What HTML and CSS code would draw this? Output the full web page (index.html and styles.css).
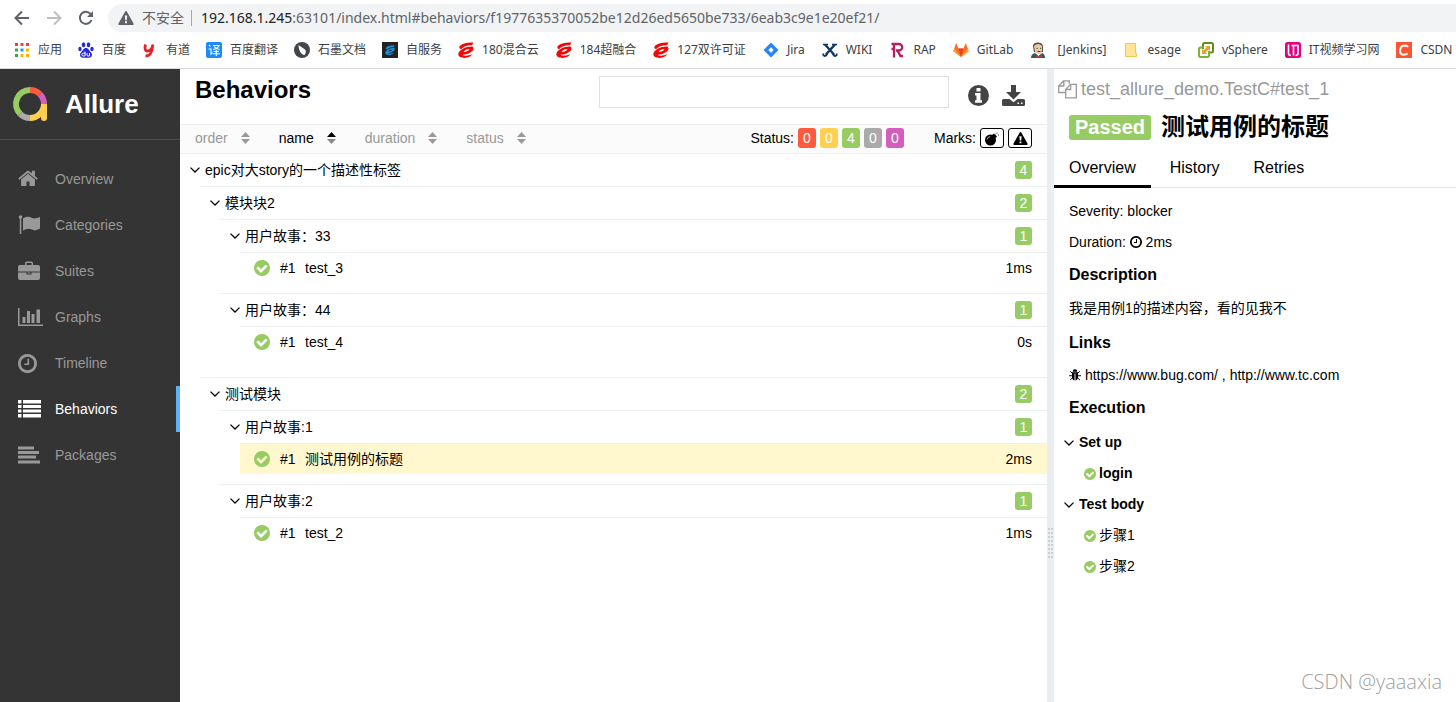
FILE: index.html
```html
<!DOCTYPE html>
<html lang="zh-CN">
<head>
<meta charset="utf-8">
<title>Allure Report</title>
<link rel="stylesheet" href="styles.css">
</head>
<body>
<svg class="defs" aria-hidden="true">
  <symbol id="check" viewBox="128 128 1536 1536"><path d="M1412 734q0-28-18-46l-91-90q-19-19-45-19t-45 19l-408 407-226-226q-19-19-45-19t-45 19l-91 90q-18 18-18 46 0 27 18 45l362 362q19 19 45 19 27 0 46-19l543-543q18-18 18-45zm252 162q0 209-103 385.500t-279.500 279.500-385.500 103-385.500-103-279.500-279.500-103-385.500 103-385.500 279.500-279.500 385.500-103 385.500 103 279.500 279.500 103 385.500z"/></symbol>
  <symbol id="clock" viewBox="128 128 1536 1536"><path d="M1024 544v448q0 14-9 23t-23 9h-320q-14 0-23-9t-9-23v-64q0-14 9-23t23-9h224v-352q0-14 9-23t23-9h64q14 0 23 9t9 23zm416 352q0-148-73-273t-198-198-273-73-273 73-198 198-73 273 73 273 198 198 273 73 273-73 198-198 73-273zm224 0q0 209-103 385.500t-279.500 279.500-385.500 103-385.500-103-279.500-279.500-103-385.500 103-385.500 279.500-279.500 385.500-103 385.500 103 279.500 279.500 103 385.500z"/></symbol>
  <symbol id="chevron" viewBox="0 0 10 6"><path d="M.5.6 5 5 9.500.6" fill="none" stroke="currentColor" stroke-width="1.300"/></symbol>
  <symbol id="sort" viewBox="0 0 9 12"><path d="M0 5 4.500 0 9 5z"/><path d="M0 7h9l-4.500 5z"/></symbol>
  <symbol id="warn" viewBox="0 0 16 14"><path fill-rule="evenodd" d="M8 0q.6 0 1 .7l6.500 11.800q.7 1.500-.8 1.500H1.300q-1.500 0-.8-1.500L7 .7Q7.400 0 8 0zM6.800 4.500l.4 4.700h1.600l.4-4.700zM7 10.300v1.900h2v-1.900z"/></symbol>
  <symbol id="ecloud" viewBox="0 0 16 16"><path d="M15.500.5C10 .2 3.500 1.500 1.600 4.300.8 5.700 1.700 7 3 7.200 5.500 4.500 9.500 3 14 3.300zM14.800 4.700C9 4 1.500 7.600.4 11.500-.4 15 4 16.300 8 15.800c3-.4 5.500-2 6.500-3.800-3 1.500-8.500 2.500-9.700.8 4.500-.3 10-2.700 10.700-5.800.2-1-.1-2-.7-2.300zM5.500 10c1-1.800 3.700-3 6-3-.3 1.600-3.200 3-6 3z"/></symbol>
</svg>

<header class="browser">
  <div class="toolbar">
    <button class="tool" aria-label="后退"><svg width="16" height="16" viewBox="0 0 16 16"><path d="M15 8H2M8 1.500 1.500 8 8 14.500" fill="none" stroke="#5f6368" stroke-width="2"/></svg></button>
    <button class="tool" aria-label="前进"><svg width="16" height="16" viewBox="0 0 16 16"><path d="M1 8h13M8 1.500 14.500 8 8 14.500" fill="none" stroke="#bdbfc1" stroke-width="2"/></svg></button>
    <button class="tool" aria-label="刷新"><svg width="16" height="16" viewBox="0 0 16 16"><path d="M13.500 10A6 6 0 1 1 12.500 4" fill="none" stroke="#5f6368" stroke-width="2"/><path d="M15 1v6H9z" fill="#5f6368"/></svg></button>
    <div class="address">
      <svg width="16" height="14"><use href="#warn"/></svg>
      <span class="insecure">不安全</span>
      <span class="url"><b>192.168.1.245</b>:63101/index.html#behaviors/f1977635370052be12d26ed5650be733/6eab3c9e1e20ef21/</span>
    </div>
  </div>
  <nav class="bookmarks" aria-label="书签">
    <a href="#"><svg viewBox="0 0 16 16"><path d="M1 1h3v3H1zM6.500 1h3v3h-3zM12 1h3v3h-3z" fill="#ea4335"/><path d="M1 6.500h3v3H1z" fill="#34a853"/><path d="M6.500 6.500h3v3h-3z" fill="#2196f3"/><path d="M12 6.500h3v3h-3zM6.500 12h3v3h-3zM12 12h3v3h-3z" fill="#fbb300"/><path d="M1 12h3v3H1z" fill="#34a853"/></svg>应用</a>
    <a href="#"><svg viewBox="0 0 16 16" fill="#2529d8"><ellipse cx="5.500" cy="2.800" rx="1.800" ry="2.500"/><ellipse cx="10.500" cy="2.800" rx="1.800" ry="2.500"/><ellipse cx="2" cy="7" rx="1.700" ry="2.200"/><ellipse cx="14" cy="7" rx="1.700" ry="2.200"/><path d="M8 6c2.500 0 3 2.500 5 4.500 2 2.200.6 5.200-1.800 5.200-1.500 0-4.900 0-6.400 0C2.400 15.700 1 12.700 3 10.500 5 8.500 5.500 6 8 6z"/><path d="M7 9.500v4.500H5.300a1.200 1.200 0 0 1 0-2.800H7M9 11v2q0 1 1 1h1.500v-3" fill="none" stroke="#fff"/></svg>百度</a>
    <a href="#"><svg viewBox="0 0 16 16"><path d="M3.500 2.500C2.500 6 3 9 5.500 9S10 7 11 2.500M10.500 5C10 11 8 14 3.500 14" fill="none" stroke="#e6212a" stroke-width="2.800"/></svg>有道</a>
    <a href="#"><svg viewBox="0 0 16 16"><rect width="16" height="16" rx="2" fill="#1a8cff"/><path d="m3 3 1.500 1.500M2.500 7H5v5l1.500-1.200M7 3.500h6Q11.500 7 7 7.500M8 4.500q2 2.500 5.500 3M7.500 9.500h5.500M7 11.700h7M10.300 8v6" fill="none" stroke="#fff" stroke-width="1.100"/></svg>百度翻译</a>
    <a href="#"><svg viewBox="0 0 16 16"><circle cx="8" cy="8" r="8" fill="#41464b"/><path d="M4.500 3 11 7.500c1.500 2 .8 4.200-.5 5.500C7 12.500 4.500 8 4.500 3z" fill="#fff"/></svg>石墨文档</a>
    <a href="#"><svg viewBox="0 0 16 16"><path fill="#222" d="M0 0h16v16H0z"/><svg x="3" y="3" width="10" height="10" fill="#168ddd"><use href="#ecloud"/></svg></svg>自服务</a>
    <a href="#" class="mixed"><svg fill="#f00808"><use href="#ecloud"/></svg>180混合云</a>
    <a href="#" class="mixed"><svg fill="#f00808"><use href="#ecloud"/></svg>184超融合</a>
    <a href="#" class="mixed"><svg fill="#f00808"><use href="#ecloud"/></svg>127双许可证</a>
    <a href="#" class="mixed"><svg viewBox="0 0 16 16"><path fill="#2684ff" fill-rule="evenodd" d="M8 .5 15.500 8 8 15.500.5 8zM8 5.300 5.300 8 8 10.700 10.700 8z"/></svg>Jira</a>
    <a href="#" class="mixed"><svg viewBox="0 0 16 16" fill="none" stroke="#12386b"><path d="M3 2.500 12 12.500M13 2.500 4 12.500" stroke-width="2.400"/><path d="M1 2.500h5M10 2.500h5" stroke-width="1.500"/><path d="M5 11.500q-.5 2.500-2.500 2.500Q.8 13.500 1.500 11.500M11 11.500q.5 2.500 2.500 2.500 1.700-.5 1-2.500" stroke-width="1.800"/></svg>WIKI</a>
    <a href="#" class="mixed"><svg viewBox="0 0 16 16" fill="none" stroke="#b51f5f" stroke-width="2.300"><path d="M2.500 2H10a3 3 0 0 1 0 6.500H7M5 2v13.500M8.500 8.500l3 5.500H14M2.500 7h3"/></svg>RAP</a>
    <a href="#" class="mixed"><svg viewBox="0 0 16 16"><path d="M8 15 .3 9.300 3.200 1l2.300 5.500h5L12.800 1l2.900 8.300z" fill="#fc6d26"/><path d="M8 15 5.500 6.500h5z" fill="#e24329"/><path d="m1.300 6.500-1 2.800L8 15zM14.700 6.500l1 2.800L8 15z" fill="#fca326"/></svg>GitLab</a>
    <a href="#" class="mixed wide"><svg viewBox="0 0 16 16"><path d="M3 4q0-3.500 5-3.500T13 5v5H4z" fill="#5b5048"/><path d="M4 4q4-4 8 0v4.500Q11.500 12 8.500 12T5 9z" fill="#e8cda9"/><path d="M1 16q0-4 4-5l3.500 3 3.500-3q3 1 3 5z" fill="#3e5560"/><path d="m6.500 13 2 1 3-1v3l-3-1-2 1z" fill="#d33833"/><path d="M6.500 6.300h1.200M10 6.300h1.200M7.500 9.500h3" stroke="#333"/></svg>[Jenkins]</a>
    <a href="#" class="mixed"><svg viewBox="0 0 16 16"><path d="M1.500 1.500h10v10h1v3h-11z" fill="#ffe594" stroke="#edc95d"/></svg>esage</a>
    <a href="#" class="mixed"><svg viewBox="0 0 16 16" fill="none"><rect x="5" y="1" width="10" height="9.500" rx="1.500" stroke="#5f8f18" stroke-width="2"/><rect x="1" y="5.500" width="10" height="9.500" rx="1.500" stroke="#7bb52c" stroke-width="2"/><path d="M6 3h7v6h-3v4H3V7h3z" fill="#fff"/><path d="M7 4h5v5l-1.500-1.500-3 3L9 12H4V7l1.500 1.500 3-3z" fill="#e6a32e"/></svg>vSphere</a>
    <a href="#" class="mixed"><svg viewBox="0 0 16 16"><rect width="16" height="16" rx="2.500" fill="#e4007f"/><path d="M3.500 2.500V11q0 2.500 2.500 2.500M6.500 3.500h6.500v7.500q0 2.500-2.500 2.500M8.500 3.500v10" fill="none" stroke="#fff" stroke-width="1.600"/></svg>IT视频学习网</a>
    <a href="#" class="mixed"><svg viewBox="0 0 16 16"><path fill="#fc5531" d="M0 0h16v16H0z"/><path d="M12 5Q11 3.500 8.800 3.500 4.500 3.700 4 8.500 4 12.500 7.500 12.700 10 12.700 11.500 11.500" fill="none" stroke="#fff" stroke-width="2"/></svg>CSDN</a>
  </nav>
</header>

<div class="app">
  <aside class="side">
    <a class="brand" href="#">
      <svg width="36" height="36" viewBox="0 0 36 36" fill="none" stroke-width="6"><path d="M18 4a14 14 0 0 1 9.900 4.100" stroke="#fd5a3e"/><path d="M27.900 8.100A14 14 0 0 1 32 18" stroke="#d35ebe"/><path d="M32 18a14 14 0 0 1-14 14" stroke="#ffd050"/><path d="M18 32a14 14 0 0 1-9.900-4.100" stroke="#aaa"/><path d="M8.100 27.900A14 14 0 0 1 18 4" stroke="#97cc64"/><path d="M32 18v14" stroke="#ffd050"/><circle cx="32" cy="32" r="3" fill="#ffd050" stroke="none"/></svg>
      <span>Allure</span>
    </a>
    <nav class="menu">
      <a href="#"><svg viewBox="64 200 1664 1500" width="20" height="18"><path d="M1472 992v480q0 26-19 45t-45 19h-384v-384h-256v384h-384q-26 0-45-19t-19-45v-480q0-1 .5-3t.5-3l575-474 575 474q1 2 1 6zm223-69l-62 74q-8 9-21 11h-3q-13 0-21-7l-692-577-692 577q-12 8-24 7-13-2-21-11l-62-74q-8-10-7-23.500t11-21.500l719-599q32-26 76-26t76 26l244 204v-195q0-14 9-23t23-9h192q14 0 23 9t9 23v408l219 182q10 8 11 21.500t-7 23.500z"/></svg>Overview</a>
      <a href="#"><svg viewBox="0 0 23 20" width="23" height="20"><circle cx="2.500" cy="2" r="1.800"/><path d="M1.800 2h1.500v17H1.800zM5 3.500C8 1.500 11 1 14 3q3 1.300 8-.9v11.500q-4.500 3-8 1-4-2.200-9 .9z"/></svg>Categories</a>
      <a href="#"><svg viewBox="0 0 22 20" width="22" height="20"><path fill-rule="evenodd" d="M7 4V2q0-1.500 1.500-1.500h5Q15 .5 15 2v2h5q2 0 2 2v4.500H0V6q0-2 2-2zm1.500 0h5V2h-5zM0 11.500h8.500v2h5v-2H22V17q0 2-2 2H2q-2 0-2-2zM9.500 11.500h3v1h-3z"/></svg>Suites</a>
      <a href="#"><svg viewBox="0 0 25 20" width="25" height="20"><path d="M0 1h1.500v16.500H25V19H0zM4.500 10h3v6h-3zM9 4h3v12H9zM13.500 7h3v9h-3zM18.500 2.500H22V16h-3.500z"/></svg>Graphs</a>
      <a href="#"><svg width="19" height="19"><use href="#clock"/></svg>Timeline</a>
      <a href="#" class="active"><svg viewBox="0 0 23 20" width="23" height="20"><path d="M0 1h3.500v3.500H0zM5 1h18v3.500H5zM0 6h3.500v3H0zM5 6h18v3H5zM0 10.500h3.500v3H0zM5 10.500h18v3H5zM0 15h3.500v3.500H0zM5 15h18v3.500H5z"/></svg>Behaviors</a>
      <a href="#"><svg viewBox="0 0 22 20" width="22" height="20"><path d="M0 1.500h16v3H0zM0 6h21v3H0zM0 10.500h18v3H0zM0 15.500h22v3H0z"/></svg>Packages</a>
    </nav>
  </aside>

  <main class="main">
    <div class="head">
      <h1>Behaviors</h1>
      <input class="search" type="text" aria-label="Search">
      <div class="actions">
        <button aria-label="Info"><svg width="21" height="21" viewBox="0 0 21 21"><path fill-rule="evenodd" d="M10.500 0a10.500 10.500 0 1 1 0 21 10.500 10.500 0 0 1 0-21zM8.500 3v3.500h4V3zM7 8v2.500h1.500v4.700H7v2.500h7v-2.500h-1.500V8z"/></svg></button>
        <button aria-label="Download"><svg width="23" height="23" viewBox="0 0 23 23"><path fill-rule="evenodd" d="M9 1h5v7h5l-7.500 7.500L4 8h5zM1.500 15h6l4 3.300 4-3.300h6q1.500 0 1.500 1.500v4Q23 22 21.500 22h-20Q0 22 0 20.500v-4Q0 15 1.500 15zM15.500 18.500V20H17v-1.500zM19 18.500V20h1.500v-1.500z"/></svg></button>
      </div>
    </div>
    <div class="filters">
      <div class="sorts">
        <button>order<svg width="9" height="12"><use href="#sort"/></svg></button>
        <button class="asc">name<svg width="9" height="12" viewBox="0 0 9 12"><path d="M0 5 4.500 0 9 5z"/><path d="M0 7h9l-4.500 5z" fill="#888"/></svg></button>
        <button>duration<svg width="9" height="12"><use href="#sort"/></svg></button>
        <button>status<svg width="9" height="12"><use href="#sort"/></svg></button>
      </div>
      <div class="group">Status:
        <button class="count failed">0</button><button class="count broken">0</button><button class="count passed">4</button><button class="count skipped">0</button><button class="count unknown">0</button>
      </div>
      <div class="group">Marks:
        <button class="mark" aria-label="Flaky"><svg width="16" height="15" viewBox="0 0 16 15"><circle cx="6.500" cy="9" r="5.500"/><path d="m8 4 2-1.500 3 3L11.500 7z"/><path d="m11 4 1.500-2H14M14.500 3v2" stroke="#999" fill="none"/><path d="M3 8.500q.5-2.500 3-3" stroke="#fff" fill="none" stroke-width=".7"/></svg></button>
        <button class="mark" aria-label="Warning"><svg width="15" height="13"><use href="#warn"/></svg></button>
      </div>
    </div>

    <div class="tree">
      <section class="node">
        <div class="title"><svg class="chev"><use href="#chevron"/></svg><span>epic对大story的一个描述性标签</span><span class="badge">4</span></div>
        <section class="node feature">
          <div class="title"><svg class="chev"><use href="#chevron"/></svg><span>模块块2</span><span class="badge">2</span></div>
          <section class="node story">
            <div class="title"><svg class="chev"><use href="#chevron"/></svg><span>用户故事：33</span><span class="badge">1</span></div>
            <a class="leaf" href="#"><svg class="ok"><use href="#check"/></svg><span class="num">#1</span><span>test_3</span><span class="time">1ms</span></a>
          </section>
          <section class="node story">
            <div class="title"><svg class="chev"><use href="#chevron"/></svg><span>用户故事：44</span><span class="badge">1</span></div>
            <a class="leaf" href="#"><svg class="ok"><use href="#check"/></svg><span class="num">#1</span><span>test_4</span><span class="time">0s</span></a>
          </section>
        </section>
        <section class="node feature">
          <div class="title"><svg class="chev"><use href="#chevron"/></svg><span>测试模块</span><span class="badge">2</span></div>
          <section class="node story">
            <div class="title"><svg class="chev"><use href="#chevron"/></svg><span>用户故事:1</span><span class="badge">1</span></div>
            <a class="leaf selected" href="#"><svg class="ok"><use href="#check"/></svg><span class="num">#1</span><span>测试用例的标题</span><span class="time">2ms</span></a>
          </section>
          <section class="node story">
            <div class="title"><svg class="chev"><use href="#chevron"/></svg><span>用户故事:2</span><span class="badge">1</span></div>
            <a class="leaf" href="#"><svg class="ok"><use href="#check"/></svg><span class="num">#1</span><span>test_2</span><span class="time">1ms</span></a>
          </section>
        </section>
      </section>
    </div>
  </main>

  <div class="gutter"><span class="grip"></span></div>

  <article class="detail">
    <div class="fullname"><svg width="19" height="19" viewBox="0 0 19 19" fill="none" stroke="currentColor" stroke-width="1.300"><path d="M7.500 12.500H.7V6L5.500.8h5.800v3M5.800 1v5H1M12.500 4.300h5.800v13.500H7.700V9.500zM12.700 4.500v5H8"/></svg><span>test_allure_demo.TestC#test_1</span></div>
    <h2 class="case"><span class="state">Passed</span>测试用例的标题</h2>
    <nav class="tabs"><a href="#" class="current">Overview</a><a href="#">History</a><a href="#">Retries</a></nav>
    <div class="body">
      <p>Severity: blocker</p>
      <p>Duration: <svg class="small"><use href="#clock"/></svg> 2ms</p>
      <h3>Description</h3>
      <p class="text">我是用例1的描述内容，看的见我不</p>
      <h3>Links</h3>
      <p class="links"><svg class="small" viewBox="0 0 13 13"><path d="M4 3q0-2.700 2.500-2.700T9 3zM3.200 3.600h6.600V8.500q0 3.500-2.800 3.900V5H6v7.400Q3.200 12 3.200 8.500z"/><path d="m1.200 2.500 2.300 2M11.800 2.500l-2.300 2M0 7.300h3.500M13 7.300H9.500M1.200 12l2.500-2.500M11.800 12 9.300 9.500" stroke="currentColor" fill="none"/></svg> <a href="#">https://www.bug.com/</a> , <a href="#">http://www.tc.com</a></p>
      <h3>Execution</h3>
      <div class="steps">
        <div class="stage"><svg class="chev"><use href="#chevron"/></svg>Set up</div>
        <div class="step strong"><svg class="tick"><use href="#check"/></svg>login</div>
        <div class="stage"><svg class="chev"><use href="#chevron"/></svg>Test body</div>
        <div class="step"><svg class="tick"><use href="#check"/></svg>步骤1</div>
        <div class="step"><svg class="tick"><use href="#check"/></svg>步骤2</div>
      </div>
    </div>
    <div class="watermark">CSDN @yaaaxia</div>
  </article>
</div>
</body>
</html>
```

FILE: styles.css
```css
* { box-sizing: border-box; }
body {
  margin: 0;
  height: 100vh;
  display: flex;
  flex-direction: column;
  overflow: hidden;
  background: #fff;
  color: #000;
  fill: currentColor;
  font: 14px/20px "Liberation Sans", "Noto Sans CJK SC", sans-serif;
}
a { color: inherit; text-decoration: none; }
button { padding: 0; border: 0; background: none; color: inherit; font: inherit; cursor: pointer; }
svg { flex: none; }
.defs { position: absolute; width: 0; height: 0; }

/* Browser chrome */
.browser {
  flex: none;
  border-bottom: 1px solid #dadada;
  font-family: "Noto Sans", "Noto Sans CJK SC", sans-serif;
}
.toolbar { display: flex; align-items: center; padding: 4px 0 0 14px; }
.tool { display: flex; margin-right: 16px; }
.address {
  flex: 1;
  display: flex;
  align-items: center;
  height: 28px;
  margin-left: -2px;
  padding-left: 10px;
  border-radius: 14px 0 0 14px;
  background: #f1f3f4;
  color: #5f6368;
  font-size: 14px;
  white-space: nowrap;
}
.insecure { margin: 0 7px 0 8px; }
.url { padding-left: 9px; border-left: 1px solid #a5a8ab; line-height: 16px; }
.url b { color: #202124; font-weight: normal; }
.bookmarks { display: flex; gap: 16px; height: 36px; padding-left: 14px; overflow: hidden; }
.bookmarks a { display: flex; flex: none; align-items: center; gap: 8px; color: #3c4043; font-size: 12px; white-space: nowrap; }
.bookmarks a > svg { width: 16px; height: 16px; }
.bookmarks .mixed { padding-right: 1px; }
.bookmarks .wide { gap: 11px; }

/* Sidebar */
.app { flex: 1; display: flex; min-height: 0; }
.side { flex: none; width: 180px; background: #343434; color: #999; }
.brand { display: flex; align-items: center; gap: 17px; height: 71px; padding-left: 12px; border-bottom: 1px solid #505050; color: #fff; font-size: 26px; font-weight: bold; }
.menu { display: flex; flex-direction: column; padding-top: 16px; }
.menu a { display: grid; grid-template-columns: 37px 1fr; align-items: center; height: 46px; padding-left: 18px; }
.menu .active { border-right: 4px solid #5fb0f5; color: #fff; }

/* Tree pane */
.main { flex: 867 1 0; min-width: 0; }
.head { display: flex; align-items: flex-start; padding: 7px 22px 10px 15px; }
.head h1 { flex: 1; margin: 0; font-size: 24px; line-height: 28px; }
.search { width: 350px; height: 32px; border: 1px solid #e0e0e0; outline: 0; font: inherit; }
.actions { display: flex; align-items: center; gap: 13px; height: 38px; margin-left: 19px; color: #444; }
.actions button { display: flex; }
.filters { display: flex; align-items: center; height: 30px; padding: 0 15px 2px; border: solid #eceff1; border-width: 1px 0; background: #fbfbfb; }
.sorts { flex: 1; display: flex; gap: 29px; color: #999; }
.sorts button { display: flex; align-items: center; gap: 13px; }
.sorts .asc { color: #000; }
.group { display: flex; align-items: center; gap: 4px; margin-left: 30px; }
.count { width: 18px; height: 20px; border-radius: 3px; color: #fff; }
.failed { background: #fd5a3e; }
.broken { background: #ffd050; }
.passed { background: #97cc64; }
.skipped { background: #aaa; }
.unknown { background: #d35ebe; }
.mark { display: flex; align-items: center; justify-content: center; width: 24px; height: 20px; border: 1px solid #000; border-radius: 3px; background: #fff; }
.feature, .story { margin-left: 20px; padding-bottom: 10px; border-top: 1px solid #eceff1; }
.title { display: flex; align-items: center; gap: 5px; height: 32px; padding: 0 15px 0 10px; }
.chev { width: 10px; height: 6px; }
.badge { margin-left: auto; width: 17px; border-radius: 3px; background: #97cc64; color: #fff; line-height: 18px; text-align: center; }
.leaf { display: flex; align-items: center; height: 31px; margin-left: 20px; padding: 0 15px 0 14px; border-top: 1px solid #eceff1; }
.selected { background: #fff8ce; }
.ok { width: 16px; height: 16px; margin-right: 10px; color: #97cc64; }
.num { width: 25px; }
.time { margin-left: auto; }

.gutter { flex: none; width: 7px; padding: 459px 1px 0; background: #eaeef1; }
.grip {
  display: block;
  height: 30px;
  background:
    linear-gradient(90deg, transparent 2px, #eaeef1 2px 3px, transparent 3px),
    repeating-linear-gradient(#ccd0d2 0 2px, transparent 2px 4px);
}

/* Test case pane */
.detail { position: relative; flex: 402 1 0; min-width: 0; }
.fullname { display: flex; align-items: center; gap: 4px; padding: 10px 0 0 4px; color: #999; font-size: 18px; }
.case { display: flex; align-items: center; gap: 10px; margin: 0; padding: 12px 0 0 15px; font-size: 24px; line-height: 32px; }
.state { padding: 0 6px; border-radius: 3px; background: #97cc64; color: #fff; font-size: 20px; line-height: 25px; }
.tabs { display: flex; gap: 4px; margin-top: 4px; border-bottom: 1px solid #e5e5e5; font-size: 16px; }
.tabs a { margin-bottom: -1px; padding: 11px 15px 7px; border-bottom: 3px solid transparent; }
.tabs .current { border-color: #000; }
.body { padding: 8px 15px; }
.body p { margin: 0; line-height: 31px; }
.body h3 { margin: 0; font-size: 16px; line-height: 33px; }
.body .text { line-height: 35px; }
.body .links { line-height: 32px; }
.small { width: 12px; height: 12px; vertical-align: -1px; }
.steps { margin: 3px 0 0 -5px; line-height: 31px; }
.stage { display: flex; align-items: center; gap: 5px; font-weight: bold; }
.step { display: flex; align-items: center; gap: 3px; padding-left: 20px; }
.strong { font-weight: bold; }
.tick { width: 12px; height: 12px; color: #97cc64; }
.watermark { position: absolute; right: 14px; bottom: 8px; color: #a0a0a0; font: 300 20px/24px "Open Sans", sans-serif; }
```
